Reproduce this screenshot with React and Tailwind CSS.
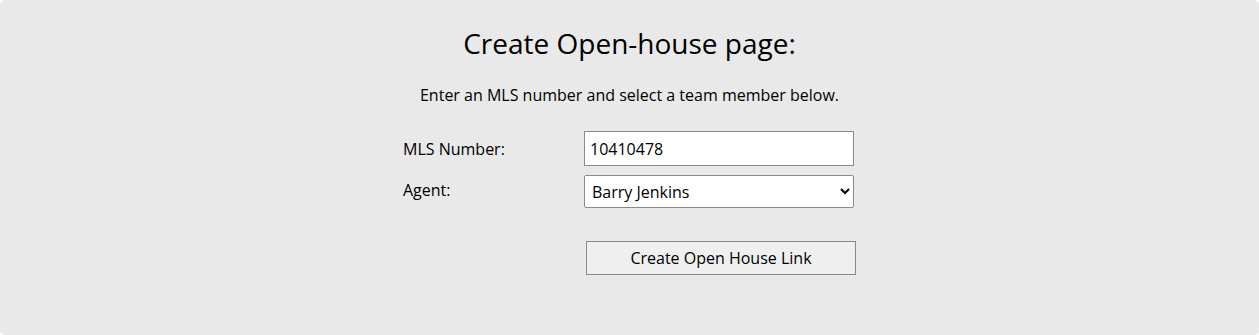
import React, { useState } from 'react';

const App = () => {
    const [mls, setMls] = useState('10410478');
    const [agent, setAgent] = useState('Barry Jenkins');

    return (
        <div className="w-[1259px] h-[335px] bg-white" style={{ fontFamily: '"Open Sans", sans-serif' }}>
            <div className="h-full bg-[#e9e9e9] rounded-[5px] flex flex-col items-center pt-[25px] text-black">
                {/* Heading */}
                <h1 className="text-[28px] leading-[36px] font-normal">Create Open-house page:</h1>
                <p className="mt-[24px] text-[16px] leading-[20px]">Enter an MLS number and select a team member below.</p>

                {/* Form */}
                <div className="mt-[26px] w-[453px] flex flex-col text-[16px]">
                    <div className="flex items-center h-[35px]">
                        <label className="w-[181px]">MLS Number:</label>
                        <input
                            type="text"
                            value={mls}
                            onChange={(e) => setMls(e.target.value)}
                            className="w-[270px] h-[35px] bg-white border border-[#8a8a8a] px-[5px] text-[16px] outline-none"
                        />
                    </div>
                    <div className="flex items-start mt-[9px]">
                        <label className="w-[181px] pt-[3px]">Agent:</label>
                        <select
                            value={agent}
                            onChange={(e) => setAgent(e.target.value)}
                            className="w-[270px] h-[33px] bg-white border border-[#8a8a8a] rounded-[2px] pl-[3px] text-[16px] outline-none"
                        >
                            <option>Barry Jenkins</option>
                            <option>Jane Smith</option>
                        </select>
                    </div>
                    <div className="flex mt-[33px]">
                        <button className="ml-[183px] w-[270px] h-[34px] bg-[#efefef] border border-[#8a8a8a] text-[16px]">
                            Create Open House Link
                        </button>
                    </div>
                </div>
            </div>
        </div>
    );
};

export default App;
